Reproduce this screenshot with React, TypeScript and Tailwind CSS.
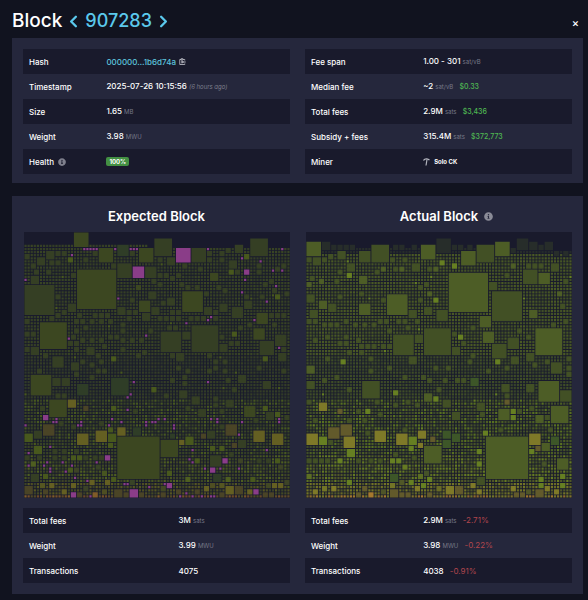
import type { ReactNode } from 'react';
import { ChevronLeft, ChevronRight } from 'lucide-react';
import { FaInfoCircle } from 'react-icons/fa';
import clsx from 'clsx';

const GRID = 86;
const GAP = 0.28;

type Tone = 'base' | 'lit' | 'green' | 'deep' | 'yellow' | 'brown' | 'orange' | 'pink' | 'faint';

interface BlockLayout {
  seed: number;
  tones: Record<Tone, string>;
  // dot colours from the top of the block to the bottom
  dots: { until: number; colors: string[] }[];
  // "x,y,size" entries, in grid cells
  squares: Partial<Record<Tone, string>>;
  firstRow: (x: number) => number;
}

const expected: BlockLayout = {
  seed: 7,
  tones: {
    base: '#353f24',
    lit: '#3c4721',
    green: '#48581d',
    deep: '#2f3d27',
    yellow: '#645f22',
    brown: '#4a4426',
    orange: '#805c28',
    pink: '#8a3d88',
    faint: '#272d2a',
  },
  dots: [
    { until: 40, colors: ['#353f25', '#323c26', '#374324', '#353f25', '#394424'] },
    { until: 54, colors: ['#303a28', '#2e3729', '#343d26'] },
    { until: 72, colors: ['#374325', '#3c4923', '#333d26', '#475820', '#384225'] },
    { until: 81, colors: ['#3d4823', '#475520', '#384326', '#4e5e20', '#3d4326'] },
    { until: 85, colors: ['#424824', '#4e4e22', '#3b4227', '#555621'] },
    { until: 86, colors: ['#6a4828', '#504826', '#5c4928', '#745028', '#4b4b26'] },
  ],
  squares: {
    lit: '16,0,5 24,5,5 37,5,5 17,12,13 5,29,9 37,22,4 75,26,4 74,31,4 2,46,7 8,54,6 30,66,14 71,56,4 44,67,6 36,17,2 60,13,3',
    green:
      '14,8,2 71,7,2 66,12,2 81,20,2 67,32,2 28,40,2 41,50,2 28,56,2 0,65,3 27,65,3 27,63,2 3,69,3 27,68,2 15,72,2 17,72,2 14,76,2 77,40,2 77,56,2 81,58,2 60,69,2 63,69,2 46,77,2 6,78,2 28,79,2 55,73,2 81,73,2 52,66,3 73,79,2',
    base:
      '0,17,10 30,10,5 39,11,4 7,6,3 4,8,3 10,6,2 12,6,2 0,7,2 19,8,2 22,6,2 8,9,2 10,9,2 2,10,2 7,12,2 3,12,2 2,14,3 15,13,2 10,20,2 14,23,3 12,25,2 10,26,2 28,10,2 34,6,2 34,9,2 40,19,3 34,21,2 41,15,2 30,24,3 33,25,2 35,25,2 33,27,2 38,26,3 16,31,2 27,33,2 29,33,2 22,26,2 24,26,2 26,26,2 0,28,2 4,28,2 8,27,2 16,28,2 18,28,2 21,28,2 24,28,2 27,28,2 18,34,2 21,34,2 24,34,2 0,32,2 2,32,2 16,35,2 14,35,2 20,37,3 2,37,3 0,37,2 34,34,2 37,34,2 42,2,6 54,5,5 68,4,3 73,2,6 46,8,3 43,8,2 59,6,2 59,8,2 65,5,2 63,6,2 63,8,2 51,10,2 56,11,2 66,9,3 75,10,2 75,12,2 68,12,2 83,10,2 81,11,2 45,13,2 43,13,2 47,14,2 50,16,2 52,17,2 58,19,2 64,18,2 71,22,3 71,20,2 63,23,3 67,24,4 76,20,2 80,18,2 79,15,2 77,16,2 46,21,3 44,22,2 41,24,3 58,24,3 61,25,2 47,25,2 49,25,2 43,27,2 45,27,2 47,27,2 49,27,2 53,27,2 55,27,2 57,27,2 79,26,2 81,26,2 83,26,2 72,29,2 54,30,9 44,32,7 51,32,3 63,33,2 76,35,5 81,33,4 63,36,3 66,35,2 68,35,2 9,40,4 15,42,3 9,47,3 12,47,3 3,64,3 65,54,3 50,51,3 54,53,3 69,46,3 77,48,3 49,39,3 82,39,3 60,72,4 69,67,3 2,78,3 0,72,2 4,72,2 9,72,2 12,72,2 19,72,2 22,72,2 24,72,2 9,70,2 12,70,2 78,58,3 56,57,3 59,64,3 75,73,2 78,73,2',
    deep: '30,4,4 17,49,4 28,47,6 61,78,3 35,63,3 47,65,2',
    yellow: '14,54,3 17,65,4 23,64,4 30,63,3 44,63,4 74,64,4 80,65,4 8,81,2 15,81,2 21,80,2 65,82,3 80,81,2 82,81,2 58,82,2 72,83,2 50,67,2 12,83,2 26,80,2',
    brown: '6,62,4 0,82,3 6,83,2 29,83,3 32,84,2 37,84,2 65,62,4 68,82,3 67,68,2 57,65,2 19,56,2 77,84,2 79,84,2 63,84,2 44,84,2 17,84,2 49,83,2 55,83,2',
    orange: '22,84,2 0,85,1 9,85,1 14,85,1 43,85,1 80,85,1',
    pink:
      '35,11,4 49,5,5 71,12,2 6,59,2 26,72,2 15,84,2 34,83,3 64,73,2 60,76,2 46,81,2 74,83,2 15,7,1 0,15,1 30,21,1 14,34,1 39,33,1 19,5,1 20,5,1 21,5,1 22,5,1 23,5,1 29,5,1 34,5,1 35,5,1 36,5,1 59,5,1 83,5,1 70,8,1 76,9,1 81,12,1 82,12,1 83,12,1 80,12,1 71,15,1 81,17,1 70,19,1 78,22,1 74,28,1 60,27,1 59,28,1 52,29,1 82,37,1 35,48,1 34,52,1 33,53,1 33,57,1 9,61,1 10,60,1 10,61,1 18,61,1 17,62,1 18,62,1 0,62,1 27,62,1 28,60,1 31,61,1 39,61,1 39,62,1 41,61,1 42,61,1 1,71,1 8,69,1 7,74,1 6,75,1 1,75,1 8,76,1 8,77,1 12,74,1 15,75,1 13,77,1 16,79,1 23,74,1 20,80,1 32,81,1 33,81,1 40,82,1 21,85,1 59,48,1 43,60,1 45,60,1 48,62,1 48,63,1 60,60,1 62,60,1 62,61,1 70,61,1 82,60,1 82,61,1 69,65,1 54,70,1 78,70,1 53,73,1 54,74,1 58,76,1 69,76,1 63,76,1 45,81,1 52,84,1 54,85,1 50,85,1 57,85,1 60,85,1 61,85,1',
    faint: '',
  },
  firstRow: (x) => (x < 40 ? 4 : 5),
};
expected.squares.lit += ' 51,19,7';

const actual: BlockLayout = {
  seed: 23,
  tones: {
    base: '#425025',
    lit: '#4d5d26',
    green: '#667f22',
    deep: '#3d5628',
    yellow: '#7e7928',
    brown: '#625a2b',
    orange: '#a5792e',
    pink: '#8a3d88',
    faint: '#272d2a',
  },
  dots: [
    { until: 7, colors: ['#272d2a', '#242a2b'] },
    { until: 40, colors: ['#455425', '#404e26', '#4a5924', '#435126'] },
    { until: 54, colors: ['#3b4828', '#37432a', '#3f4d27'] },
    { until: 72, colors: ['#414e28', '#4c5f23', '#3c4929', '#587020', '#475227'] },
    { until: 81, colors: ['#4c5b25', '#5c6e23', '#455228', '#657a22', '#505727'] },
    { until: 85, colors: ['#555c27', '#686a25', '#4f5528', '#727426'] },
    { until: 86, colors: ['#8e692d', '#716629', '#7e702b', '#9d762c', '#71742a'] },
  ],
  squares: {
    lit: '0,3,5 46,13,13 37,4,5 50,6,5 61,3,5 26,20,7 75,13,4 57,32,4 74,31,9 56,27,4 4,22,3 17,23,4 75,48,7 79,56,6 62,57,4 38,69,6 58,66,14 81,73,4 0,43,3 17,14,3 76,68,3 74,59,3 0,16,2 4,15,2 24,11,2 30,11,2 41,11,2 39,19,2 72,25,3 66,10,2 81,19,2 38,52,3',
    green:
      '13,13,2 41,21,2 47,10,2 43,9,2 49,33,2 11,41,2 61,41,2 28,51,2 66,57,2 19,57,2 4,66,3 33,66,3 57,64,2 13,70,3 72,70,2 55,70,2 55,74,2 39,79,2 37,81,2 82,78,2 82,81,2 75,79,2 75,81,2 33,69,2 27,73,2 29,73,2 10,73,2 13,80,2 66,59,2 41,53,2 33,80,2',
    base:
      '10,6,3 17,6,4 21,4,6 2,8,3 13,10,3 0,20,3 7,23,3 1,25,3 33,25,3 38,24,3 28,33,7 38,31,9 35,33,3 34,10,3 42,25,4 0,8,2 5,8,2 7,7,2 27,8,2 31,8,2 22,12,2 24,21,2 39,11,2 10,12,2 9,15,2 1,14,2 36,21,2 36,17,2 38,16,2 10,20,2 17,19,2 0,28,2 2,28,2 5,29,2 7,29,2 9,29,2 12,28,2 15,29,2 18,29,2 21,29,2 23,28,2 25,28,2 29,28,2 31,28,2 35,28,2 55,4,6 60,19,10 70,12,5 79,10,3 59,16,3 60,36,5 65,34,4 47,37,3 82,23,2 83,15,2 83,28,2 79,29,2 71,10,2 73,10,2 75,10,2 18,48,6 0,48,3 82,51,4 79,42,4 33,40,3 66,40,3 71,39,3 44,54,3 55,55,3 63,49,3 71,49,3 47,58,3 55,79,3 0,73,2 2,73,2 4,73,2 6,73,2 16,73,2 20,73,2 23,73,2 10,35,2 12,35,2 17,36,2 19,36,2 21,36,2 24,36,2 26,36,2',
    deep: '53,47,3 44,64,3 47,65,3 44,67,3 79,66,3 27,78,3',
    yellow: '4,55,3 0,65,4 12,66,4 22,64,4 29,65,4 36,64,3 72,65,4 36,68,2 45,82,3 2,83,2 35,82,2 53,81,2 77,82,2 66,82,2 55,83,2 80,83,2 8,82,2',
    brown: '7,63,4 11,62,4 10,57,2 40,66,2 64,54,2 74,69,2 27,83,3 48,82,3 74,83,3 16,84,2 30,84,2 32,84,2 67,84,2 69,84,2 39,84,2 18,82,2',
    orange: '20,84,2 14,85,1 25,85,1 37,85,1',
    faint: '5,3,3 8,4,2 10,4,2 12,4,2 14,4,2 28,4,2 30,4,2 34,4,2 42,2,5 68,2,4 72,3,3 77,3,3 75,4,2 47,4,2 49,4,2 52,4,2 66,5,2 80,6,2 83,6,2',
  },
  firstRow: (x) => (x > 66 ? 6 : 5),
};

// small integer hash, gives the same block on every render
function noise(x: number, y: number, seed: number) {
  let h = Math.imul(x + 1, 374761393) ^ Math.imul(y + 1, 668265263) ^ Math.imul(seed, 2246822519);
  h = Math.imul(h ^ (h >>> 13), 1274126177);
  h = Math.imul(h ^ (h >>> 15), 2246822519);
  return ((h ^ (h >>> 16)) >>> 0) / 4294967296;
}

// chance that a free cell starts a 2x2 square
function density(y: number) {
  if (y < 9 || y > 83) return 0;
  if (y < 25) return 0.008;
  if (y < 45) return 0.04;
  return 0.025;
}

function packBlock(layout: BlockLayout) {
  const taken = new Set<number>();
  const paths = new Map<string, string>();

  const place = (x: number, y: number, size: number, color: string) => {
    for (let i = 0; i < size; i++) {
      for (let j = 0; j < size; j++) taken.add((y + j) * GRID + x + i);
    }
    const side = size - GAP;
    const d = `M${x + GAP / 2} ${y + GAP / 2}h${side}v${side}h-${side}z`;
    paths.set(color, (paths.get(color) ?? '') + d);
  };

  const isFree = (x: number, y: number, size: number) => {
    if (x + size > GRID || y + size > GRID) return false;
    for (let i = 0; i < size; i++) {
      for (let j = 0; j < size; j++) {
        if (taken.has((y + j) * GRID + x + i)) return false;
      }
    }
    return true;
  };

  for (const [tone, list] of Object.entries(layout.squares)) {
    for (const entry of list.split(' ').filter(Boolean)) {
      const [x, y, size] = entry.split(',').map(Number);
      if (isFree(x, y, size)) place(x, y, size, layout.tones[tone as Tone]);
    }
  }

  for (let y = 0; y < GRID; y++) {
    const { colors } = layout.dots.find((band) => y < band.until)!;
    for (let x = 0; x < GRID; x++) {
      if (y < layout.firstRow(x) || !isFree(x, y, 1)) continue;
      const n = noise(x, y, layout.seed);
      const color = colors[Math.floor(noise(x, y, layout.seed + 1) * colors.length)];
      if (n < density(y) && isFree(x, y, 2)) {
        place(x, y, 2, y > 72 ? color : layout.tones.base);
      } else {
        place(x, y, 1, n > 0.996 && y > 7 ? layout.tones.green : color);
      }
    }
  }

  return [...paths];
}

const expectedPaths = packBlock(expected);
const actualPaths = packBlock(actual);

function BlockGraph({ label, paths }: { label: string; paths: [string, string][] }) {
  return (
    <div className="pl-px">
      <svg viewBox={`0 0 ${GRID} ${GRID}`} role="img" aria-label={label} className="block w-full bg-[#191a2c]">
        {paths.map(([color, d]) => (
          <path key={color} d={d} fill={color} />
        ))}
      </svg>
    </div>
  );
}

interface Row {
  label: ReactNode;
  value: ReactNode;
}

function StatsTable({ rows, labelWidth }: { rows: Row[]; labelWidth: string }) {
  return (
    <table className="w-full table-fixed border-collapse text-left">
      <tbody>
        {rows.map(({ label, value }, i) => (
          <tr key={i} className="h-[25px] odd:bg-[#191a2c]">
            <th scope="row" className={clsx('px-1.5 font-medium', labelWidth)}>{label}</th>
            <td className="whitespace-nowrap px-1.5">{value}</td>
          </tr>
        ))}
      </tbody>
    </table>
  );
}

const Unit = ({ children }: { children: ReactNode }) => (
  <span className="text-[6px] font-normal text-[#777988]">{children}</span>
);

const Fiat = ({ children }: { children: ReactNode }) => (
  <span className="ml-1 text-[7px] text-[#4fb852]">{children}</span>
);

const Diff = ({ children }: { children: ReactNode }) => (
  <span className="ml-1 font-normal text-[#b0464c]">{children}</span>
);

function Pickaxe() {
  return (
    <svg viewBox="0 0 14 16" className="h-2 w-[7px]" fill="none" stroke="#b4b6bf" aria-hidden="true">
      <path d="M1 5C3 2 8 1 13 4" strokeWidth="2.6" />
      <path d="M8 3L6 15" strokeWidth="2.4" />
    </svg>
  );
}

const summaryLeft: Row[] = [
  {
    label: 'Hash',
    value: (
      <span className="flex items-center gap-[3px]">
        <a href="#hash" className="text-[#5cc4dd]">000000…1b6d74a</a>
        <button type="button" aria-label="Copy hash">
          <svg viewBox="0 0 14 14" className="size-[7px]" fill="none" stroke="#c5c6cf" strokeWidth="1.6" aria-hidden="true">
            <path d="M4 3H1.500V13H11.500V11M8 3H11.500V5M4 1.500H8V4H4zM4 6.500H8M4 9.500H8M13.500 8H7M9 6L7 8L9 10" />
          </svg>
        </button>
      </span>
    ),
  },
  {
    label: 'Timestamp',
    value: <>2025-07-26 10:15:56 <i className="text-[6px] font-normal text-[#7d7f8c]">(6 hours ago)</i></>,
  },
  { label: 'Size', value: <>1.65 <Unit>MB</Unit></> },
  { label: 'Weight', value: <>3.98 <Unit>MWU</Unit></> },
  {
    label: (
      <span className="flex items-center gap-1">
        Health <FaInfoCircle className="size-2 text-[#7f808d]" />
      </span>
    ),
    value: (
      <span className="block w-fit rounded-xs bg-[#439043] px-[3px] text-[6px] leading-[9px] font-bold">100%</span>
    ),
  },
];

const summaryRight: Row[] = [
  { label: 'Fee span', value: <>1.00 - 301 <Unit>sat/vB</Unit></> },
  { label: 'Median fee', value: <>~2 <Unit>sat/vB</Unit> <Fiat>$0.33</Fiat></> },
  { label: 'Total fees', value: <>2.9M <Unit>sats</Unit> <Fiat>$3,436</Fiat></> },
  { label: 'Subsidy + fees', value: <>315.4M <Unit>sats</Unit> <Fiat>$372,773</Fiat></> },
  {
    label: 'Miner',
    value: (
      <span className="flex items-center gap-1 text-[6px] font-bold">
        <Pickaxe /> Solo CK
      </span>
    ),
  },
];

const expectedStats: Row[] = [
  { label: 'Total fees', value: <>3M <Unit>sats</Unit></> },
  { label: 'Weight', value: <>3.99 <Unit>MWU</Unit></> },
  { label: 'Transactions', value: '4075' },
];

const actualStats: Row[] = [
  { label: 'Total fees', value: <>2.9M <Unit>sats</Unit> <Diff>-2.71%</Diff></> },
  { label: 'Weight', value: <>3.98 <Unit>MWU</Unit> <Diff>-0.22%</Diff></> },
  { label: 'Transactions', value: <>4038 <Diff>-0.91%</Diff></> },
];

export default function App() {
  return (
    <main className="min-h-screen bg-[#11131f] pr-[5px] pb-1.5 pl-3 font-['Inter',sans-serif] text-[8px] leading-3 font-medium text-white">
      <header className="flex h-[38px] items-center justify-between pt-1">
        <h1 className="flex items-center text-[19px] leading-6">
          Block
          <span className="ml-0.5 flex items-center text-[18px] text-[#5bc9ec]">
            <a href="#previous" aria-label="Previous block">
              <ChevronLeft size={19} strokeWidth={3} />
            </a>
            <a href="#907283" className="mx-0.5">907283</a>
            <a href="#next" aria-label="Next block">
              <ChevronRight size={19} strokeWidth={3} />
            </a>
          </span>
        </h1>
        <button type="button" aria-label="Close" className="mt-1 mr-1 self-center text-[11px] leading-3">×</button>
      </header>

      <section className="grid grid-cols-2 gap-[15px] bg-[#25273c] px-[11px] pt-[11px] pb-[9px]">
        <StatsTable rows={summaryLeft} labelWidth="w-[29%]" />
        <StatsTable rows={summaryRight} labelWidth="w-[42%]" />
      </section>

      <section className="mt-[13px] grid grid-cols-2 gap-[15px] bg-[#25273c] px-[11px] pt-2.5 pb-[11px]">
        <div>
          <h2 className="mb-1.5 text-center text-[13px] leading-5 font-semibold">Expected Block</h2>
          <BlockGraph label="Expected block" paths={expectedPaths} />
          <div className="mt-2.5">
            <StatsTable rows={expectedStats} labelWidth="w-[56%]" />
          </div>
        </div>
        <div>
          <h2 className="mb-1.5 flex items-center justify-center gap-1.5 pl-4 text-[13px] leading-5 font-semibold">
            Actual Block <FaInfoCircle className="size-[9px] text-[#8a8b97]" />
          </h2>
          <BlockGraph label="Actual block" paths={actualPaths} />
          <div className="mt-2.5">
            <StatsTable rows={actualStats} labelWidth="w-[42%]" />
          </div>
        </div>
      </section>
    </main>
  );
}
